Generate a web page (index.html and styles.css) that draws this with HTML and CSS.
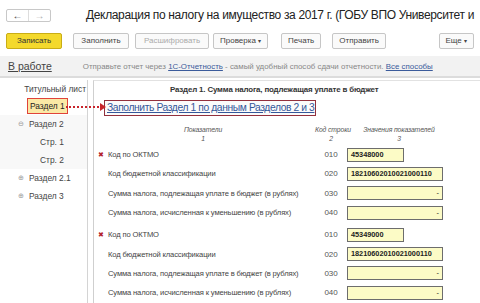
FILE: index.html
```html
<!DOCTYPE html>
<html lang="ru">
<head>
    <meta charset="UTF-8">
    <title>Декларация по налогу на имущество</title>
    <link rel="stylesheet" href="styles.css">
</head>
<body>
    <div class="titlebar">
        <div class="nav">
            <span class="nav-btn">&#8592;</span>
            <span class="nav-btn off">&#8594;</span>
        </div>
        <h1>Декларация по налогу на имущество за 2017 г. (ГОБУ ВПО Университет и</h1>
    </div>

    <div class="toolbar">
        <span class="btn primary">Записать</span>
        <span class="btn w-fill">Заполнить</span>
        <span class="btn disabled">Расшифровать</span>
        <span class="btn">Проверка <i class="caret">&#9662;</i></span>
        <span class="btn gap">Печать</span>
        <span class="btn">Отправить</span>
        <span class="btn more">Еще <i class="caret">&#9662;</i></span>
    </div>

    <div class="infobar">
        <a class="status">В работе</a>
        <span class="hint">Отправьте отчет через <a>1С-Отчетность</a> - самый удобный способ сдачи отчетности. <a>Все способы</a></span>
    </div>

    <div class="main">
        <div class="sidebar">
            <div class="item title-item">Титульный лист</div>
            <div class="item"><span class="current">Раздел 1</span></div>
            <div class="item group"><span class="tog">&#8854;</span>Раздел 2</div>
            <div class="item group sub">Стр. 1</div>
            <div class="item group sub">Стр. 2</div>
            <div class="item"><span class="tog">&#8853;</span>Раздел 2.1</div>
            <div class="item"><span class="tog">&#8853;</span>Раздел 3</div>
        </div>

        <div class="content">
            <div class="section-title">Раздел 1. Сумма налога, подлежащая уплате в бюджет</div>
            <div class="fill-row">
                <span class="fill-link">Заполнить Раздел 1 по данным Разделов 2 и 3</span>
            </div>
            <div class="arrow"></div>

            <div class="grid head">
                <div class="h1">Показатели<br>1</div>
                <div class="h2">Код строки<br>2</div>
                <div class="h3">Значения показателей<br>3</div>
            </div>

            <div class="grid rows">
                <span class="mark">&#10006;</span><span>Код по ОКТМО</span><span class="code">010</span><span class="val short">45348000</span>
                <span></span><span>Код бюджетной классификации</span><span class="code">020</span><span class="val">18210602010021000110</span>
                <span></span><span>Сумма налога, подлежащая уплате в бюджет (в рублях)</span><span class="code">030</span><span class="val num">-</span>
                <span></span><span>Сумма налога, исчисленная к уменьшению (в рублях)</span><span class="code">040</span><span class="val num">-</span>
            </div>

            <div class="grid rows second">
                <span class="mark">&#10006;</span><span>Код по ОКТМО</span><span class="code">010</span><span class="val short">45349000</span>
                <span></span><span>Код бюджетной классификации</span><span class="code">020</span><span class="val">18210602010021000110</span>
                <span></span><span>Сумма налога, подлежащая уплате в бюджет (в рублях)</span><span class="code">030</span><span class="val num">-</span>
                <span></span><span>Сумма налога, исчисленная к уменьшению (в рублях)</span><span class="code">040</span><span class="val num">-</span>
            </div>
        </div>
    </div>
</body>
</html>
```

FILE: styles.css
```css
body {
    margin: 0;
    width: 480px;
    height: 303px;
    overflow: hidden;
    background: #fff;
    font-family: "Liberation Sans", Arial, sans-serif;
    color: #333;
}

a {
    text-decoration: underline;
}

.titlebar {
    display: flex;
    align-items: center;
    height: 30px;
    padding-left: 6px;
    white-space: nowrap;
}

.nav {
    display: flex;
    border: 1px solid #c8c8c8;
    border-radius: 2px;
    height: 11px;
    margin-top: 1px;
}

.nav-btn {
    width: 21px;
    font-size: 10px;
    line-height: 11px;
    text-align: center;
    color: #444;
}

.nav-btn.off {
    color: #aaa;
    border-left: 1px solid #ddd;
}

h1 {
    margin: 0 0 0 35px;
    font-size: 12px;
    letter-spacing: -0.35px;
    font-weight: normal;
    color: #222;
}

.toolbar {
    display: flex;
    height: 16px;
    margin-top: 3px;
    padding-left: 6px;
}

.btn {
    display: inline-block;
    height: 14px;
    line-height: 14px;
    border: 1px solid #c6c6c6;
    border-radius: 2px;
    background: #fafafa;
    font-size: 8px;
    color: #444;
    text-align: center;
    margin-right: 6px;
    padding: 0 6px;
}

.btn.primary {
    width: 42px;
    background: #f4d92c;
    border-color: #c9ad16;
    color: #333;
    margin-right: 11px;
}

.btn.w-fill {
    width: 42px;
}

.btn.disabled {
    width: 60px;
    color: #aaa;
    margin-right: 4px;
}

.btn.gap {
    margin-left: 7px;
    margin-right: 11px;
}

.btn.more {
    margin-left: auto;
    margin-right: 6px;
}

.caret {
    font-style: normal;
    font-size: 6px;
}

.infobar {
    display: flex;
    align-items: center;
    height: 20px;
    margin-top: 7px;
    background: #f2f2f2;
    border-bottom: 2px solid #dcdcdc;
    padding-left: 8px;
    white-space: nowrap;
}

.status {
    font-size: 10.5px;
    color: #444;
    margin-right: 31px;
}

.hint {
    font-size: 7.9px;
    color: #888;
}

.hint a {
    color: #3b5b9b;
}

.main {
    display: flex;
    margin-top: 2px;
}

.sidebar {
    width: 87px;
    height: 230px;
    border-right: 1px solid #d4d4d4;
    font-size: 8.4px;
    color: #444;
}

.item {
    height: 18px;
    display: flex;
    align-items: center;
    padding-left: 29px;
}

.item.title-item {
    justify-content: flex-end;
    padding: 0 1px 0 0;
    height: 17px;
}

.item.group {
    background: #f8f8f8;
}

.item.sub {
    padding-left: 40px;
}

.tog {
    margin-left: -11px;
    width: 11px;
    font-size: 7px;
    color: #999;
}

.current {
    display: inline-block;
    padding: 2px 2px;
    margin-left: -2px;
    background: #fbe9a6;
    border: 1px solid #e0433a;
    color: #222;
}

.content {
    position: relative;
    flex: 1;
    margin-left: 5px;
    border-left: 1px solid #cfcfcf;
    border-top: 1px solid #e2e2e2;
    height: 230px;
}

.section-title {
    font-size: 7.9px;
    letter-spacing: -0.15px;
    font-weight: bold;
    color: #333;
    padding: 4px 0 0 76px;
    white-space: nowrap;
}

.fill-row {
    padding: 3px 0 0 10px;
}

.fill-link {
    display: inline-block;
    border: 1px solid #93303d;
    padding: 1px 1px 2px 2px;
    font-size: 10.3px;
    letter-spacing: -0.4px;
    color: #35589a;
    text-decoration: underline;
    background: #fbfbfb;
    white-space: nowrap;
}

/* dotted pointer from sidebar item to the fill link */
.arrow {
    position: absolute;
    left: -28px;
    top: 25px;
    width: 36px;
    border-top: 2px dotted #c8242b;
}

.arrow::after {
    content: "";
    position: absolute;
    right: -4px;
    top: -5px;
    border-left: 6px solid #c8242b;
    border-top: 4px solid transparent;
    border-bottom: 4px solid transparent;
}

.grid {
    display: grid;
    grid-template-columns: 10px 207px 32px 100px;
    padding-left: 4px;
    font-size: 7.6px;
    letter-spacing: -0.15px;
    color: #444;
    white-space: nowrap;
}

.head {
    margin-top: 9px;
    font-style: italic;
    font-size: 6.8px;
    letter-spacing: -0.1px;
    line-height: 9px;
    text-align: center;
    color: #555;
}

.head .h1 {
    grid-column: 1 / 3;
    padding-right: 7px;
}

.head .h3 {
    padding-left: 4px;
}

.rows {
    grid-auto-rows: 19.3px;
    align-items: center;
    margin-top: 2px;
}

.rows.second {
    margin-top: 3px;
}

.mark {
    color: #b3242b;
    font-size: 7px;
}

.code {
    text-align: center;
    color: #555;
    font-size: 8px;
}

.val {
    box-sizing: border-box;
    width: 96px;
    height: 14px;
    line-height: 12px;
    border: 1px solid #6d6d6d;
    background: #fcfbc6;
    padding: 0 3px;
    font-weight: bold;
    font-size: 7.3px;
    letter-spacing: 0;
    color: #222;
}

.val.short {
    width: 57px;
}

.val.num {
    text-align: right;
    font-weight: normal;
}
```
